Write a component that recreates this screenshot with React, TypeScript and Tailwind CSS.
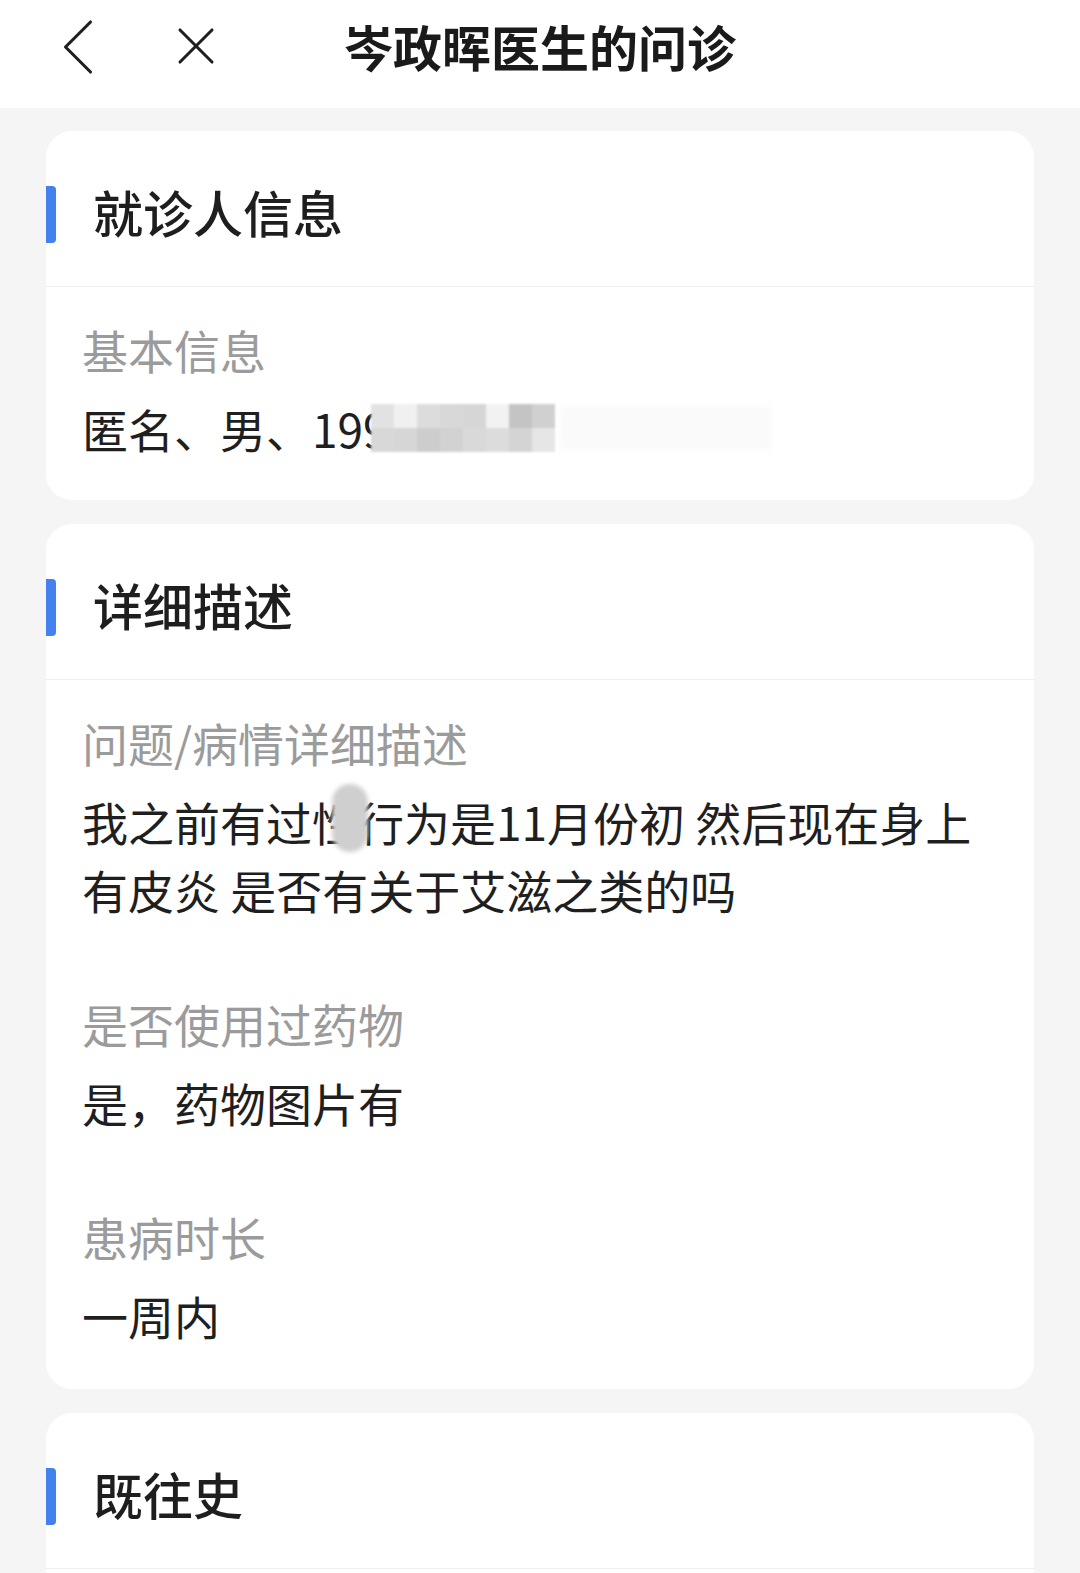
import { ChevronLeft, X } from 'lucide-react';

const mosaicTop = ['#e2e2e2', '#f0f0f0', '#dcdcdc', '#d8d8d8', '#d6d6d6', '#f2f2f2', '#c4c4c4', '#d0d0d0'];
const mosaicBottom = ['#d8d8d8', '#d6d6d6', '#cdcdcd', '#d2d2d2', '#d9d9d9', '#dcdcdc', '#d4d4d4', '#e6e6e6'];

const CardHeader = ({ title }: { title: string }) => (
  <div className="relative flex h-[156px] items-center border-b border-[#efefef] pt-1">
    <div className="absolute left-0 top-[55px] h-[57px] w-[10px] rounded-r-[4px] bg-[#4281ee]" />
    <h2 className="pl-[47px] text-[50px] font-medium leading-none text-[#1e1e1e]">{title}</h2>
  </div>
);

const Field = ({ label, children, first }: { label: string; children: React.ReactNode; first?: boolean }) => (
  <div className={first ? '' : 'mt-[66px]'}>
    <div className="text-[46px] leading-[68px] text-[#9b9b9b]">{label}</div>
    <div className="mt-[11px] text-[46px] leading-[68px] text-[#1f1f1f]">{children}</div>
  </div>
);

const App = () => {
  return (
    <div className="min-h-screen overflow-hidden bg-[#f5f5f5] font-['Noto_Sans_CJK_SC','Noto_Sans',sans-serif]">
      {/* Top bar */}
      <header className="relative flex h-[108px] items-center justify-center bg-white">
        <button className="absolute left-[28px] top-[-3px] text-[#1f1f1f]">
          <ChevronLeft size={100} strokeWidth={0.75} />
        </button>
        <button className="absolute left-[164px] top-[14px] text-[#1f1f1f]">
          <X size={64} strokeWidth={1.15} />
        </button>
        <h1 className="-mt-[16px] text-[49px] font-bold text-[#1a1a1a]">岑政晖医生的问诊</h1>
      </header>

      <main className="flex flex-col gap-[24px] px-[46px] pt-[23px]">
        {/* 就诊人信息 */}
        <section className="overflow-hidden rounded-[26px] bg-white">
          <CardHeader title="就诊人信息" />
          <div className="pl-[36px] pr-[33px] pb-[38px] pt-[28px]">
            <Field label="基本信息" first>
              <span className="inline-flex items-center">
                <span>匿名、男、199</span>
                <span className="relative -ml-[18px] inline-flex h-[48px] w-[400px]">
                  <span className="flex flex-col blur-[1px]">
                    <span className="flex">
                      {mosaicTop.map((c, i) => (
                        <span key={i} className="h-[24px] w-[23px]" style={{ backgroundColor: c }} />
                      ))}
                    </span>
                    <span className="flex">
                      {mosaicBottom.map((c, i) => (
                        <span key={i} className="h-[24px] w-[23px]" style={{ backgroundColor: c }} />
                      ))}
                    </span>
                  </span>
                  <span className="ml-[6px] mt-[2px] h-[44px] w-[220px] bg-[#fafafa] blur-[3px]" />
                </span>
              </span>
            </Field>
          </div>
        </section>

        {/* 详细描述 */}
        <section className="overflow-hidden rounded-[26px] bg-white">
          <CardHeader title="详细描述" />
          <div className="pl-[36px] pr-[33px] pb-[40px] pt-[28px]">
            <Field label="问题/病情详细描述" first>
              我之前有过
              <span className="relative">
                性
                <span className="absolute left-[20px] top-[-4px] h-[68px] w-[36px] rounded-full bg-[#cfcfcf] blur-[2px]" />
              </span>
              行为是11月份初 然后现在身上有皮炎 是否有关于艾滋之类的吗
            </Field>
            <Field label="是否使用过药物">是，药物图片有</Field>
            <Field label="患病时长">一周内</Field>
          </div>
        </section>

        {/* 既往史 */}
        <section className="overflow-hidden rounded-[26px] bg-white">
          <CardHeader title="既往史" />
          <div className="h-[200px]" />
        </section>
      </main>
    </div>
  );
};

export default App;
